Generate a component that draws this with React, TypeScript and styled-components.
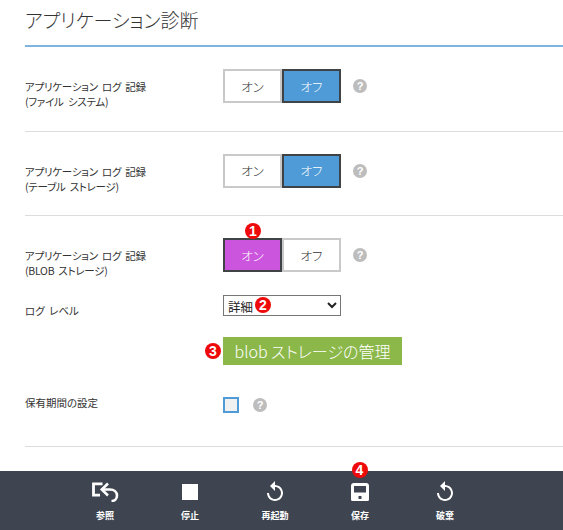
import React from "react";
import styled, { createGlobalStyle } from "styled-components";
import { MdReplay } from "react-icons/md";

const GlobalStyle = createGlobalStyle`
  html, body {
    margin: 0;
    padding: 0;
    background: #fff;
  }
  * {
    box-sizing: border-box;
  }
`;

const ROWS = [
  { label: "アプリケーション ログ 記録", sub: "(ファイル システム)", on: false },
  { label: "アプリケーション ログ 記録", sub: "(テーブル ストレージ)", on: false },
];

const FOOTER = [
  { title: "参照", icon: "browse" },
  { title: "停止", icon: "stop" },
  { title: "再起動", icon: "replay" },
  { title: "保存", icon: "save", badge: "4" },
  { title: "破棄", icon: "replay" },
];

const HelpIcon = () => <Help>?</Help>;

const Toggle = ({ on, accent, badge }: { on: boolean; accent?: boolean; badge?: string }) => (
  <ToggleGroup>
    <ToggleButton $active={on} $color={accent ? "#cb55dc" : "#4f9bd7"}>
      オン
      {badge && <StepBadge $top={-17} $left={20}>{badge}</StepBadge>}
    </ToggleButton>
    <ToggleButton $active={!on} $color="#4f9bd7">
      オフ
    </ToggleButton>
  </ToggleGroup>
);

const FooterIcon = ({ name }: { name: string }) => {
  if (name === "stop") return <StopSquare />;
  if (name === "replay") return <MdReplay size={24} />;
  if (name === "save") {
    return (
      <svg width="18" height="18" viewBox="0 0 18 18">
        <path
          fill="#fff"
          fillRule="evenodd"
          d="M3 0h12a3 3 0 0 1 3 3v13.500a1.500 1.500 0 0 1-1.500 1.500h-15A1.500 1.500 0 0 1 0 16.500V3a3 3 0 0 1 3-3zM3 3v6.500h12V3zM7.500 13v3h3v-3z"
        />
      </svg>
    );
  }
  return (
    <svg width="27" height="20" viewBox="0 0 27 20" fill="none" stroke="#fff">
      <path strokeWidth="2.800" d="M10.500 1.800H1.500v11.400H8" />
      <path strokeWidth="2.600" d="M16 1.500L9.800 7.500l6.200 6" />
      <path strokeWidth="2.600" d="M11 7.500h7c4 0 7 2.500 7 6s-2.500 5.500-5.500 5.500" />
    </svg>
  );
};

export default function App() {
  return (
    <Page>
      <GlobalStyle />
      <Content>
        <Title>アプリケーション診断</Title>
        {ROWS.map(({ label, sub, on }) => (
          <Row key={sub}>
            <Label>
              {label}
              <br />
              {sub}
            </Label>
            <Control>
              <Toggle on={on} />
              <HelpIcon />
            </Control>
          </Row>
        ))}
        <Section>
          <Row as="div" $plain>
            <Label>
              アプリケーション ログ 記録
              <br />
              (BLOB ストレージ)
            </Label>
            <Control>
              <Toggle on accent badge="1" />
              <HelpIcon />
            </Control>
          </Row>
          <LevelRow>
            <LevelLabel>ログ レベル</LevelLabel>
            <SelectWrap>
              <LevelSelect defaultValue="詳細">
                <option>詳細</option>
              </LevelSelect>
              <StepBadge $top={2} $left={32}>2</StepBadge>
            </SelectWrap>
          </LevelRow>
          <ManageRow>
            <ManageButton>
              blob ストレージの管理
              <StepBadge $top={6} $left={-18}>3</StepBadge>
            </ManageButton>
          </ManageRow>
          <RetentionRow>
            <RetentionLabel>保有期間の設定</RetentionLabel>
            <RetentionControl>
              <CheckBox />
              <HelpIcon />
            </RetentionControl>
          </RetentionRow>
        </Section>
      </Content>
      <Footer>
        {FOOTER.map(({ title, icon, badge }) => (
          <FooterItem key={title}>
            {badge && <StepBadge $top={-9} $left={34}>{badge}</StepBadge>}
            <IconSlot>
              <FooterIcon name={icon} />
            </IconSlot>
            <FooterLabel>{title}</FooterLabel>
          </FooterItem>
        ))}
      </Footer>
    </Page>
  );
}

const Page = styled.div`
  width: 563px;
  height: 530px;
  display: flex;
  flex-direction: column;
  overflow: hidden;
  font-family: "Noto Sans CJK JP", "Liberation Sans", sans-serif;
  font-feature-settings: "palt";
  color: #333;
`;

const Content = styled.div`
  flex: 1;
  padding-left: 25px;
`;

const Title = styled.h1`
  margin: 0;
  height: 47px;
  padding-top: 5px;
  font-size: 19px;
  line-height: 29px;
  font-weight: 300;
  color: #333;
  border-bottom: 2px solid #7fb4e0;
`;

const Row = styled.div<{ $plain?: boolean }>`
  display: grid;
  grid-template-columns: 198px auto;
  justify-content: start;
  height: ${(p) => (p.$plain ? "auto" : "84.5px")};
  padding-top: 22px;
  border-bottom: ${(p) => (p.$plain ? "none" : "1px solid #dcdcdc")};
`;

const Section = styled.div`
  height: 231px;
  border-bottom: 1px solid #dcdcdc;
`;

const Label = styled.div`
  font-size: 10.5px;
  line-height: 15px;
  padding-top: 10px;
  letter-spacing: -0.25px;
  word-spacing: 2px;
  color: #333;
`;

const Control = styled.div`
  display: flex;
  align-items: center;
  align-self: start;
  gap: 12px;
`;

const ToggleGroup = styled.div`
  display: flex;
  height: 34px;
`;

const ToggleButton = styled.div<{ $active: boolean; $color: string }>`
  position: relative;
  width: 59px;
  height: 34px;
  display: flex;
  align-items: center;
  justify-content: center;
  font-size: 12.5px;
  font-weight: 300;
  background: ${(p) => (p.$active ? p.$color : "#fff")};
  color: ${(p) => (p.$active ? "#fff" : "#333")};
  border: 2px solid ${(p) => (p.$active ? "#3f4346" : "#c9c9c9")};
`;

const Help = styled.span`
  width: 14px;
  height: 14px;
  border-radius: 50%;
  background: #bdbdbd;
  color: #fff;
  display: flex;
  align-items: center;
  justify-content: center;
  font-family: "Liberation Sans", sans-serif;
  font-size: 11px;
  font-weight: 700;
`;

const StepBadge = styled.span<{ $top: number; $left: number }>`
  position: absolute;
  top: ${(p) => p.$top}px;
  left: ${(p) => p.$left}px;
  width: 16px;
  height: 16px;
  border-radius: 50%;
  background: #ee0a0a;
  color: #fff;
  display: flex;
  align-items: center;
  justify-content: center;
  font-family: "Liberation Sans", sans-serif;
  font-size: 14px;
  font-weight: 700;
  line-height: 1;
`;

const LevelRow = styled.div`
  display: grid;
  grid-template-columns: 198px auto;
  justify-content: start;
  margin-top: 17px;
`;

const LevelLabel = styled.div`
  font-size: 10.5px;
  line-height: 15px;
  padding-top: 8px;
  word-spacing: 2px;
`;

const SelectWrap = styled.div`
  position: relative;
  width: 118px;
  height: 21px;
`;

const LevelSelect = styled.select`
  display: block;
  width: 118px;
  height: 21px;
  padding: 0;
  font-family: "Noto Sans CJK JP", sans-serif;
  font-size: 12.5px;
  color: #222;
  background: #fff;
  border: 1px solid #767676;
  border-radius: 0;
`;

const ManageRow = styled.div`
  padding: 19px 0 0 198px;
`;

const ManageButton = styled.div`
  position: relative;
  width: 179px;
  height: 28px;
  display: flex;
  align-items: center;
  justify-content: center;
  background: #8cb84a;
  color: #fff;
  font-size: 16px;
  font-weight: 300;
  white-space: nowrap;
`;

const RetentionRow = styled.div`
  display: grid;
  grid-template-columns: 198px auto;
  justify-content: start;
  margin-top: 30px;
`;

const RetentionLabel = styled.div`
  font-size: 10.5px;
  line-height: 15px;
`;

const RetentionControl = styled(Control)`
  margin-top: 2px;
`;

const CheckBox = styled.span`
  width: 16px;
  height: 16px;
  background: #f1f1f1;
  border: 2px solid #4f9bd7;
  margin-right: 2px;
`;

const Footer = styled.div`
  height: 59px;
  flex-shrink: 0;
  display: flex;
  justify-content: center;
  padding-right: 13px;
  background: #3e4550;
  color: #fff;
`;

const FooterItem = styled.div`
  position: relative;
  width: 85px;
  display: flex;
  flex-direction: column;
  align-items: center;
`;

const IconSlot = styled.div`
  height: 30px;
  margin-top: 6px;
  display: flex;
  align-items: center;
  justify-content: center;
`;

const StopSquare = styled.span`
  display: block;
  width: 16px;
  height: 16px;
  background: #fff;
`;

const FooterLabel = styled.div`
  margin-top: 2px;
  font-size: 9px;
  line-height: 13px;
  font-weight: 700;
`;
